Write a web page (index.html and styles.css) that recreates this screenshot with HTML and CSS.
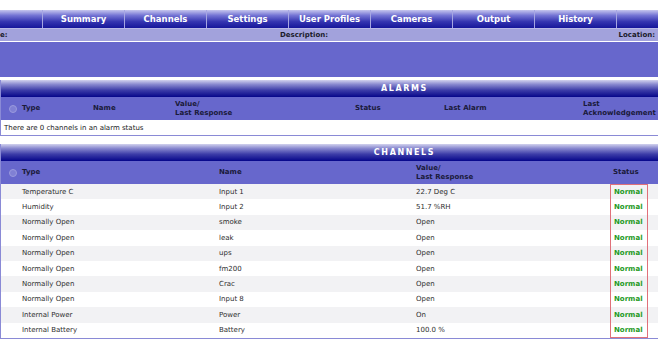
FILE: index.html
```html
<!DOCTYPE html>
<html>
<head>
<meta charset="utf-8">
<link rel="stylesheet" href="styles.css">
</head>
<body>
<div class="page">
  <nav class="nav">
    <div class="tab tab-lead"></div>
    <div class="tab">Summary</div>
    <div class="tab">Channels</div>
    <div class="tab">Settings</div>
    <div class="tab">User Profiles</div>
    <div class="tab">Cameras</div>
    <div class="tab">Output</div>
    <div class="tab">History</div>
    <div class="tab tab-tail"></div>
  </nav>
  <div class="info">
    <span>e:</span>
    <span>Description:</span>
    <span>Location:</span>
  </div>
  <div class="band"></div>

  <section class="panel alarms">
    <div class="panel-title">ALARMS</div>
    <div class="grid alarm-cols colhead">
      <div class="dot-cell"><span class="dot"></span></div>
      <div>Type</div>
      <div>Name</div>
      <div>Value/<br>Last Response</div>
      <div>Status</div>
      <div>Last Alarm</div>
      <div>Last<br>Acknowledgement</div>
    </div>
    <div class="empty-row">There are 0 channels in an alarm status</div>
  </section>

  <section class="panel channels">
    <div class="panel-title">CHANNELS</div>
    <div class="grid chan-cols colhead">
      <div class="dot-cell"><span class="dot"></span></div>
      <div>Type</div>
      <div>Name</div>
      <div>Value/<br>Last Response</div>
      <div class="status-head">Status</div>
      <div></div>
    </div>
    <div class="grid chan-cols row"><div></div><div>Temperature C</div><div>Input 1</div><div>22.7 Deg C</div><div class="status first">Normal</div><div></div></div>
    <div class="grid chan-cols row"><div></div><div>Humidity</div><div>Input 2</div><div>51.7 %RH</div><div class="status">Normal</div><div></div></div>
    <div class="grid chan-cols row"><div></div><div>Normally Open</div><div>smoke</div><div>Open</div><div class="status">Normal</div><div></div></div>
    <div class="grid chan-cols row"><div></div><div>Normally Open</div><div>leak</div><div>Open</div><div class="status">Normal</div><div></div></div>
    <div class="grid chan-cols row"><div></div><div>Normally Open</div><div>ups</div><div>Open</div><div class="status">Normal</div><div></div></div>
    <div class="grid chan-cols row"><div></div><div>Normally Open</div><div>fm200</div><div>Open</div><div class="status">Normal</div><div></div></div>
    <div class="grid chan-cols row"><div></div><div>Normally Open</div><div>Crac</div><div>Open</div><div class="status">Normal</div><div></div></div>
    <div class="grid chan-cols row"><div></div><div>Normally Open</div><div>Input 8</div><div>Open</div><div class="status">Normal</div><div></div></div>
    <div class="grid chan-cols row"><div></div><div>Internal Power</div><div>Power</div><div>On</div><div class="status">Normal</div><div></div></div>
    <div class="grid chan-cols row"><div></div><div>Internal Battery</div><div>Battery</div><div>100.0 %</div><div class="status last">Normal</div><div></div></div>
  </section>
</div>
</body>
</html>
```

FILE: styles.css
```css
html, body {
  margin: 0;
  padding: 0;
  background: #ffffff;
  overflow: hidden;
}
body {
  font-family: "DejaVu Sans", Verdana, sans-serif;
  font-size: 7px;
  color: #2e2e2e;
}
.page {
  width: 658px;
  padding-top: 10px;
}

/* top navigation */
.nav {
  display: flex;
  height: 18px;
  background: linear-gradient(to bottom, #c6c6ee 0%, #7474d4 30%, #3434b0 65%, #16169a 100%);
}
.tab {
  width: 81px;
  flex: none;
  border-right: 1px solid #a6a6e2;
  color: #ffffff;
  font-weight: bold;
  font-size: 8.5px;
  display: flex;
  align-items: center;
  justify-content: center;
}
.tab-lead { width: 42px; }
.tab-tail { flex: 1; border-right: none; }

.info {
  display: grid;
  grid-template-columns: 280px 1fr auto;
  height: 12px;
  align-items: center;
  padding-right: 3px;
  background: #a2a2dc;
  border-top: 1px solid #b8b8e6;
  font-weight: bold;
  color: #1a1a2a;
}
.band {
  margin-top: 1px;
  height: 35px;
  background: #6767cc;
}

/* panels */
.panel {
  border-left: 1px solid #8a8ad6;
  border-bottom: 1px solid #8a8ad6;
}
.alarms { margin-top: 3px; }
.channels { margin-top: 8px; }
.panel-title {
  height: 17px;
  display: flex;
  align-items: center;
  justify-content: center;
  padding-left: 150px;
  background: linear-gradient(to bottom, #d2d2ee 0%, #8a8ad0 25%, #3c3ca8 60%, #06068a 100%);
  color: #ffffff;
  font-weight: bold;
  font-size: 8px;
  letter-spacing: 1.6px;
}
.grid {
  display: grid;
  align-items: center;
}
.alarm-cols {
  grid-template-columns: 21px 71px 82px 180px 89px 139px 1fr;
}
.chan-cols {
  grid-template-columns: 21px 197px 197px 194px 38px 1fr;
}
.colhead {
  background: #6767cc;
  font-weight: bold;
  color: #1a1a3a;
  line-height: 9px;
}
.alarms .colhead { height: 23px; }
.channels .colhead { height: 23px; }
.dot-cell {
  display: flex;
  justify-content: center;
  padding-left: 2px;
}
.dot {
  width: 6px;
  height: 6px;
  border-radius: 50%;
  background: #8080d4;
  border: 1px solid #9a9ade;
}
.status-head { padding-left: 3px; }

.empty-row {
  height: 15px;
  display: flex;
  align-items: center;
  padding-left: 3px;
  background: #ffffff;
  color: #1a1a1a;
}

.row {
  height: 15.4px;
  background: #ffffff;
}
.row:nth-of-type(odd) { background: #f2f2f4; }
.row:nth-of-type(even) { background: #ffffff; }
.status {
  height: 100%;
  box-sizing: border-box;
  padding-left: 3px;
  display: flex;
  align-items: center;
  border-left: 1px solid #e0707a;
  border-right: 1px solid #e0707a;
  color: #1f9a1f;
  font-weight: bold;
}
.status.first { border-top: 1px solid #e0707a; }
.status.last { border-bottom: 1px solid #e0707a; }
```
